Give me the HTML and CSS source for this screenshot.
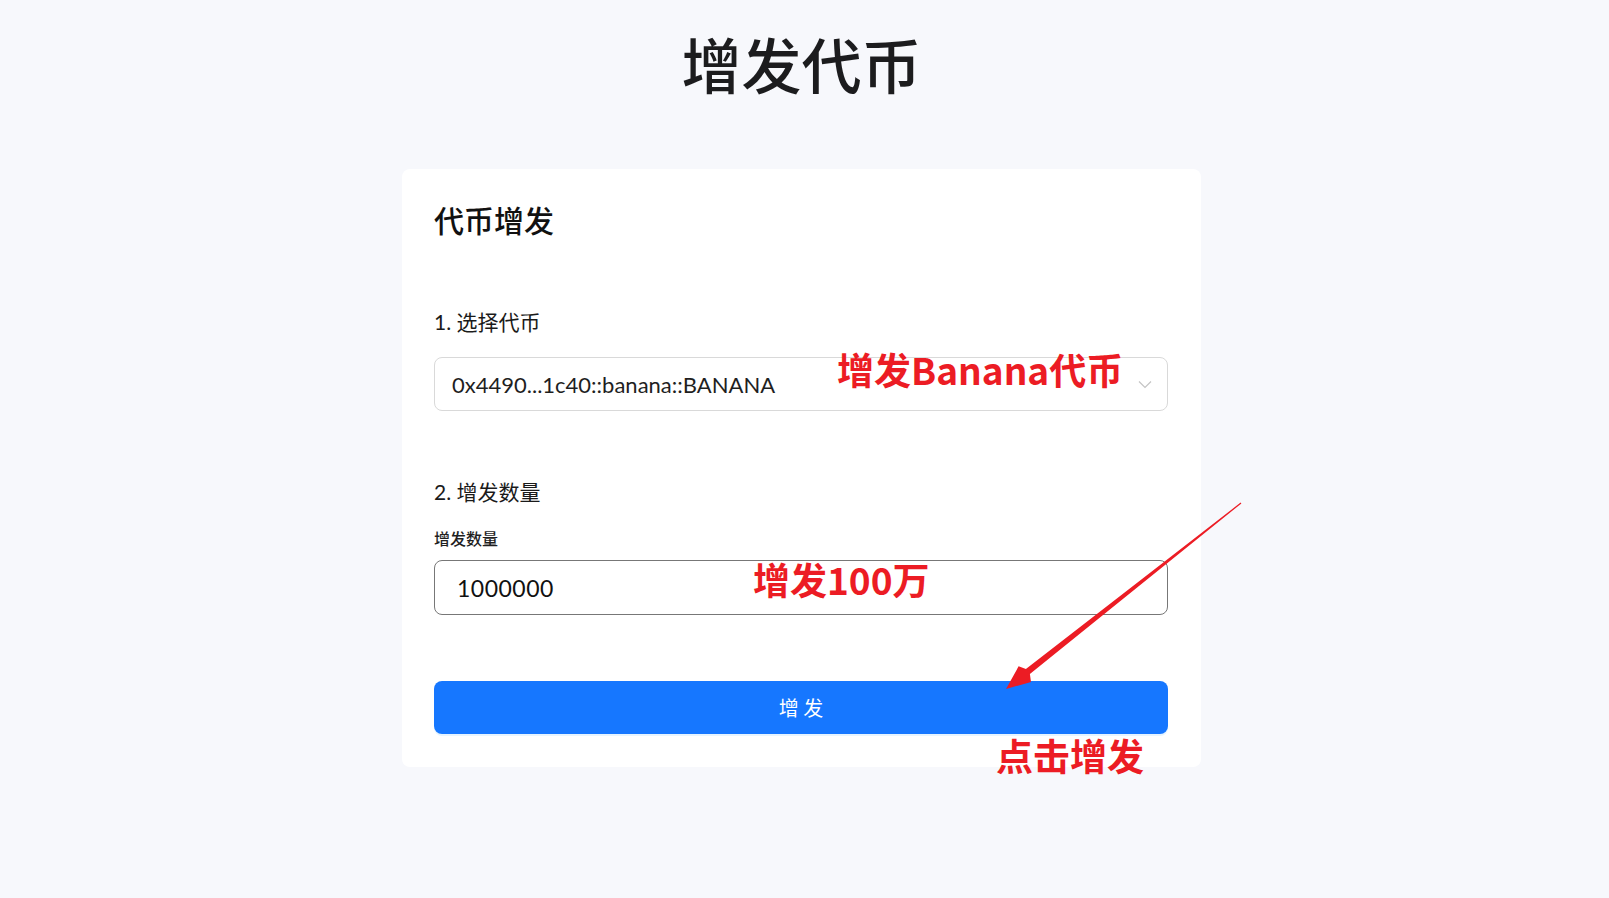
FILE: index.html
```html
<!DOCTYPE html>
<html lang="zh">
<head>
<meta charset="utf-8">
<title>增发代币</title>
<link rel="stylesheet" href="styles.css">
</head>
<body>
<main class="page">
  <h1 class="page-title">增发代币</h1>
  <section class="card">
    <h2 class="card-title">代币增发</h2>

    <div class="step">
      <div class="step-label">1. 选择代币</div>
      <div class="select">
        <span class="select-value">0x4490...1c40::banana::BANANA</span>
        <svg class="chevron" width="14" height="9" viewBox="0 0 14 9"><path d="M1 1.5 L7 7.5 L13 1.5" fill="none" stroke="#c4c4c4" stroke-width="1.2"/></svg>
        <span class="note note-select">增发Banana代币</span>
      </div>
    </div>

    <div class="step step-amount">
      <div class="step-label">2. 增发数量</div>
      <label class="field-label">增发数量</label>
      <div class="input">
        <span class="input-value">1000000</span>
        <span class="note note-amount">增发100万</span>
      </div>
    </div>

    <div class="action">
      <button class="btn-primary">增 发</button>
      <span class="note note-click">点击增发</span>
      <svg class="arrow" width="250" height="200" viewBox="0 0 250 200">
        <polygon fill="#ec1c24" points="240.4,2.4 28.9,173.1 30,180.9 5,188 17.6,165.3 24.9,168.1 239.6,1.6"/>
      </svg>
    </div>
  </section>
</main>
</body>
</html>
```

FILE: styles.css
```css
* { box-sizing: border-box; }
html, body { margin: 0; padding: 0; }
body {
  background: #f7f8fc;
  font-family: "Lato", "Noto Sans CJK SC", sans-serif;
  color: #1a1a1a;
}
.page {
  min-height: 100vh;
  display: flex;
  flex-direction: column;
  align-items: center;
  padding: 28px 6px 120px 0;
}
.page-title {
  margin: 0;
  font-family: "Noto Sans CJK SC", sans-serif;
  font-size: 60px;
  line-height: 70px;
  font-weight: 500;
  color: #1c1c1e;
}
.card {
  position: relative;
  overflow: visible;
  margin-top: 71px;
  width: 799px;
  background: #fff;
  border-radius: 8px;
  padding: 30px 33px 33px 32px;
}
.card-title {
  margin: 0;
  font-family: "Noto Sans CJK SC", sans-serif;
  font-size: 30px;
  line-height: 40px;
  font-weight: 500;
  color: #111;
}
.step { margin-top: 69px; }
.step-amount { margin-top: 67px; }
.step-label {
  font-size: 21px;
  line-height: 28px;
  color: #1a1a1a;
}
.select {
  position: relative;
  margin-top: 21px;
  height: 54px;
  border: 1px solid #d9d9d9;
  border-radius: 8px;
  display: flex;
  align-items: center;
  padding: 0 15px 0 17px;
}
.select-value {
  flex: 1;
  font-size: 22px;
  color: #1f1f1f;
}
.field-label {
  display: block;
  margin-top: 21px;
  font-family: "Noto Sans CJK SC", sans-serif;
  font-size: 16px;
  line-height: 22px;
  font-weight: 500;
  color: #1f1f1f;
}
.input {
  position: relative;
  margin-top: 11px;
  height: 55px;
  border: 1px solid #777;
  border-radius: 8px;
  display: flex;
  align-items: center;
  padding: 0 22px;
}
.input-value {
  font-size: 23px;
  letter-spacing: 0.5px;
  color: #111;
}
.action {
  position: relative;
  margin-top: 66px;
}
.btn-primary {
  display: block;
  width: 100%;
  height: 53px;
  border: 0;
  border-radius: 8px;
  background: #1677ff;
  color: #fff;
  font-family: "Noto Sans CJK SC", sans-serif;
  font-size: 20px;
  box-shadow: 0 2px 0 rgba(5, 145, 255, 0.1);
}
.note {
  position: absolute;
  z-index: 5;
  font-family: "Noto Sans CJK SC", sans-serif;
  font-weight: 700;
  font-size: 37px;
  line-height: 1.1;
  color: #ec1c24;
  white-space: nowrap;
}
.note-select { left: 402px; top: -9px; }
.note-amount { left: 318px; top: -2px; }
.note-click { left: 562px; top: 54px; }
.arrow {
  position: absolute;
  z-index: 5;
  left: 567px;
  top: -180px;
}
```
